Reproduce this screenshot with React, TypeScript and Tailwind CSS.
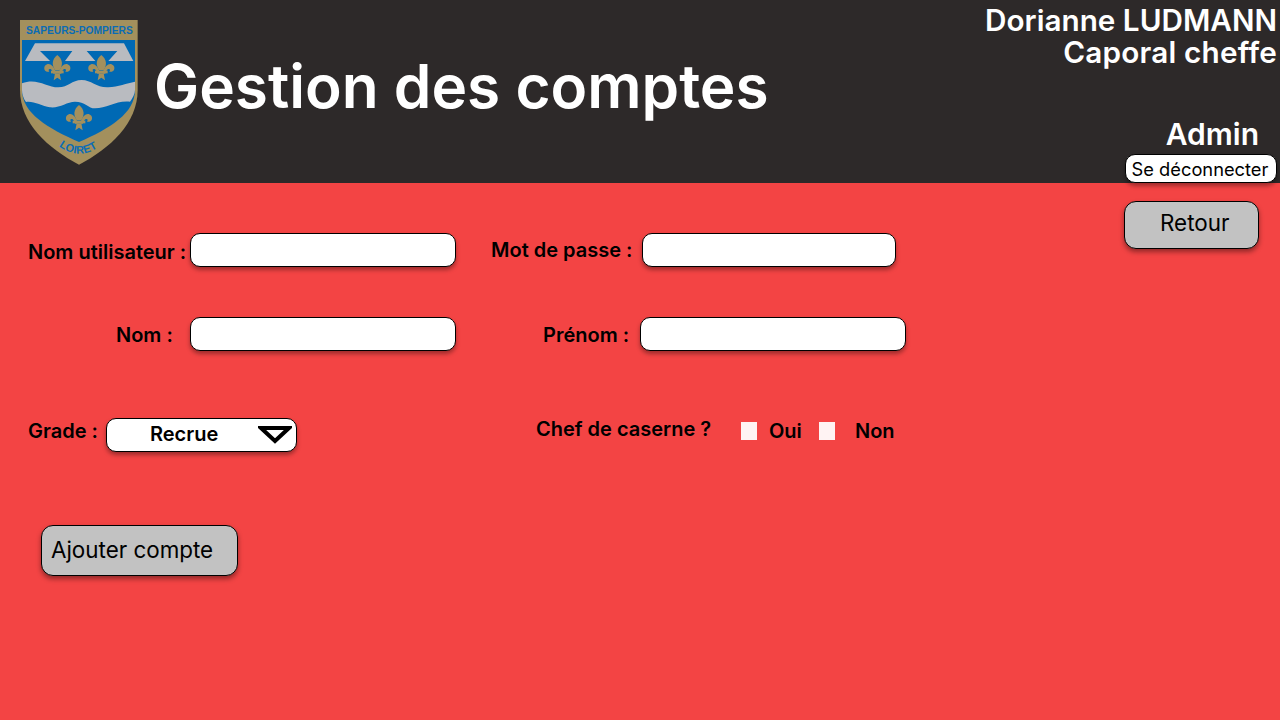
const inputCls = "h-[34px] rounded-[10px] border border-black bg-white shadow-[0_3px_4px_rgba(0,0,0,0.35)]";
const labelCls = "text-[20px] leading-[24px] font-semibold text-black";
const btnCls = "rounded-[12px] border border-black bg-[#c2c2c2] text-black shadow-[0_3px_5px_rgba(0,0,0,0.4)]";

function Fleur({ x, y }: { x: number; y: number }) {
  return (
    <g transform={`translate(${x} ${y})`} fill="#a3905d">
      <path d="M0 -38 C-17 -24 -17 -8 -7 8 L7 8 C17 -8 17 -24 0 -38 Z" />
      <path d="M-6 10 C-12 -8 -26 -18 -37 -6 C-43 4 -36 15 -24 12 C-29 5 -24 2 -19 5 C-15 8 -13 14 -12 18 L-5 18 Z" />
      <path d="M6 10 C12 -8 26 -18 37 -6 C43 4 36 15 24 12 C29 5 24 2 19 5 C15 8 13 14 12 18 L5 18 Z" />
      <rect x="-19" y="9" width="38" height="8" />
      <path d="M-7 17 L7 17 L11 38 L0 30 L-11 38 Z" />
    </g>
  );
}

function Logo() {
  return (
    <svg width="118" height="145" viewBox="60 60 354 435" className="shrink-0">
      <path d="M60 60 H413 V270 C413 370 330 445 237 494 C144 445 60 370 60 270 Z" fill="#a3905d" />
      <path d="M66 120 H405 V270 C405 340 330 385 237 426 C144 385 66 340 66 270 Z" fill="#0069b4" />
      <path d="M105 130 H372 L400 183 H75 Z" fill="#b9bbc0" />
      <path d="M120 153 H217 L195 183 L172 205 Z M260 153 H352 L325 183 L305 205 Z" fill="#0069b4" />
      <path d="M66 250 C110 232 140 262 175 262 C205 262 215 240 245 240 C275 240 290 264 325 262 C355 260 380 250 405 245 V270 C405 282 398 295 390 305 C350 300 320 325 285 325 C265 325 255 305 225 305 C200 305 180 325 150 322 C125 318 100 302 78 306 C70 295 66 282 66 270 Z" fill="#b9bbc0" />
      <Fleur x={172} y={203} />
      <Fleur x={304} y={203} />
      <Fleur x={237} y={353} />
      <text transform="translate(238 101) scale(0.93 1)" fontFamily="Liberation Sans" fontWeight="700" fontSize="33" fill="#0b6cb5" textAnchor="middle">SAPEURS-POMPIERS</text>
      <path id="loiret" d="M176 438 Q237 484 300 438" fill="none" />
      <text fontFamily="Liberation Sans" fontWeight="700" fontSize="33" fill="#0b6cb5" letterSpacing="1">
        <textPath href="#loiret">LOIRET</textPath>
      </text>
    </svg>
  );
}

export default function App() {
  return (
    <div className="flex h-[720px] w-[1280px] flex-col overflow-hidden bg-[#f34444] font-['Inter',sans-serif]">
      <header className="flex h-[183px] shrink-0 bg-[#2d2929] text-white">
        <div className="ml-[20px] mt-[20px]"><Logo /></div>
        <h1 className="ml-[16px] mt-[50px] text-[60.3px] leading-[73px] font-semibold">Gestion des comptes</h1>
        <div className="ml-auto mr-[3px] flex flex-col items-end pt-[4px]">
          <div className="text-right text-[29.7px] leading-[32px] font-semibold">
            <p>Dorianne LUDMANN</p>
            <p className="tracking-[0.2px]">Caporal cheffe</p>
          </div>
          <p className="mt-[48px] mr-[18px] text-[30px] leading-[36px] font-semibold">Admin</p>
          <button className="mt-[2px] h-[29px] w-[152px] rounded-[10px] border border-black bg-white pr-[2px] text-[18.3px] leading-[22px] text-black shadow-[0_3px_4px_rgba(0,0,0,0.35)]">
            Se déconnecter
          </button>
        </div>
      </header>

      <main className="flex flex-1 justify-between">
        <div className="flex flex-col pt-[50px]">
          <div className="flex h-[34px] items-center">
            <label className={`${labelCls} ml-[28px] mt-[3px] w-[162px]`}>Nom utilisateur :</label>
            <div className={`${inputCls} w-[266px]`} />
            <label className={`${labelCls} ml-[35px] mb-[1px] w-[151px]`}>Mot de passe :</label>
            <div className={`${inputCls} w-[254px]`} />
          </div>
          <div className="mt-[50px] flex h-[34px] items-center">
            <label className={`${labelCls} ml-[116px] mt-[2px] w-[74px]`}>Nom :</label>
            <div className={`${inputCls} w-[266px]`} />
            <label className={`${labelCls} ml-[87px] mt-[2px] w-[97px]`}>Prénom :</label>
            <div className={`${inputCls} w-[266px]`} />
          </div>
          <div className="mt-[67px] flex h-[34px] items-center">
            <label className={`${labelCls} ml-[28px] mb-[8px] w-[78px]`}>Grade :</label>
            <div className={`${inputCls} flex w-[191px] items-center`}>
              <span className="ml-[43px] pb-[2px] text-[20px] leading-[24px] font-semibold text-black">Recrue</span>
              <svg width="34" height="20" viewBox="0 0 34 20" className="ml-auto mr-[4px]">
                <path d="M3 3 H31 L17 16 Z" fill="none" stroke="#000" strokeWidth="4" />
              </svg>
            </div>
            <label className={`${labelCls} ml-[239px] mb-[12px] w-[205px]`}>Chef de caserne ?</label>
            <div className="mb-[9px] h-[18px] w-[16px] bg-[#fff3f3]" />
            <span className={`${labelCls} ml-[12px] mb-[8px] w-[50px]`}>Oui</span>
            <div className="mb-[9px] h-[18px] w-[16px] bg-[#fff3f3]" />
            <span className={`${labelCls} ml-[20px] mb-[8px]`}>Non</span>
          </div>
          <button className={`${btnCls} ml-[41px] mt-[73px] h-[51px] w-[197px] pb-[2px] pl-[9px] text-left text-[22.4px] leading-[28px]`}>
            Ajouter compte
          </button>
        </div>
        <div className="pt-[18px] pr-[21px]">
          <button className={`${btnCls} h-[48px] w-[135px] pb-[5px] pl-[35px] text-left text-[22.4px] leading-[28px]`}>
            Retour
          </button>
        </div>
      </main>
    </div>
  );
}
